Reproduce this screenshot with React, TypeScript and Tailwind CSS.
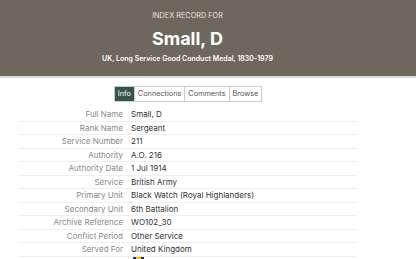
import React from "react";

interface IField {
  label: string;
  value: string;
}

const fields: IField[] = [
  { label: "Full Name", value: "Small, D" },
  { label: "Rank Name", value: "Sergeant" },
  { label: "Service Number", value: "211" },
  { label: "Authority", value: "A.O. 216" },
  { label: "Authority Date", value: "1 Jul 1914" },
  { label: "Service", value: "British Army" },
  { label: "Primary Unit", value: "Black Watch (Royal Highlanders)" },
  { label: "Secondary Unit", value: "6th Battalion" },
  { label: "Archive Reference", value: "WO102_30" },
  { label: "Conflict Period", value: "Other Service" },
  { label: "Served For", value: "United Kingdom" },
];

const tabs = ["Info", "Connections", "Comments", "Browse"];

const App = () => {
  return (
    <div className="w-[416px] h-[259px] overflow-hidden bg-white font-['Inter','Liberation_Sans',sans-serif]">
      <header className="h-[78px] bg-[#6e675d] border-b-2 border-[#dcdad6]">
        <div className="w-[375px] flex flex-col items-center pt-[11px]">
          <p className="text-[7.3px] leading-[10px] text-[#e4e1dc] uppercase">Index Record For</p>
          <h1 className="mt-[6px] text-[18px] leading-[24px] font-bold text-white">Small, D</h1>
          <p className="mt-[3px] text-[7px] leading-[10px] font-semibold text-white">
            UK, Long Service Good Conduct Medal, 1830-1979
          </p>
        </div>
      </header>

      <div className="w-[375px]">
        <nav className="flex justify-center pt-[8px]">
          <div className="flex border border-[#c9cfcd] ml-[1px]">
            {tabs.map((tab, i) => (
              <span
                key={tab}
                className={
                  i === 0
                    ? "px-[3px] h-[14px] leading-[14px] text-[7.3px] bg-[#355450] text-white"
                    : "px-[3px] h-[14px] leading-[14px] text-[7.3px] text-[#555] bg-white border-l border-[#c9cfcd]"
                }
              >
                {tab}
              </span>
            ))}
          </div>
        </nav>

        <div className="mt-[6px] ml-[18px] w-[339px]">
          {fields.map((f) => (
            <div key={f.label} className="flex h-[13.5px] items-center border-b border-[#f0f0f0] text-[8px]">
              <span className="w-[105px] text-right text-[#8a8a8a]">{f.label}</span>
              <span className="ml-[8px] text-[#333]">{f.value}</span>
            </div>
          ))}
          <div className="pl-[115px]">
            <svg width="11" height="6" viewBox="0 0 11 6" className="block">
              <rect width="11" height="6" fill="#1f2f5e" />
              <rect x="3" width="5" height="3" fill="#e8c23c" />
            </svg>
          </div>
        </div>
      </div>
    </div>
  );
};

export default App;
